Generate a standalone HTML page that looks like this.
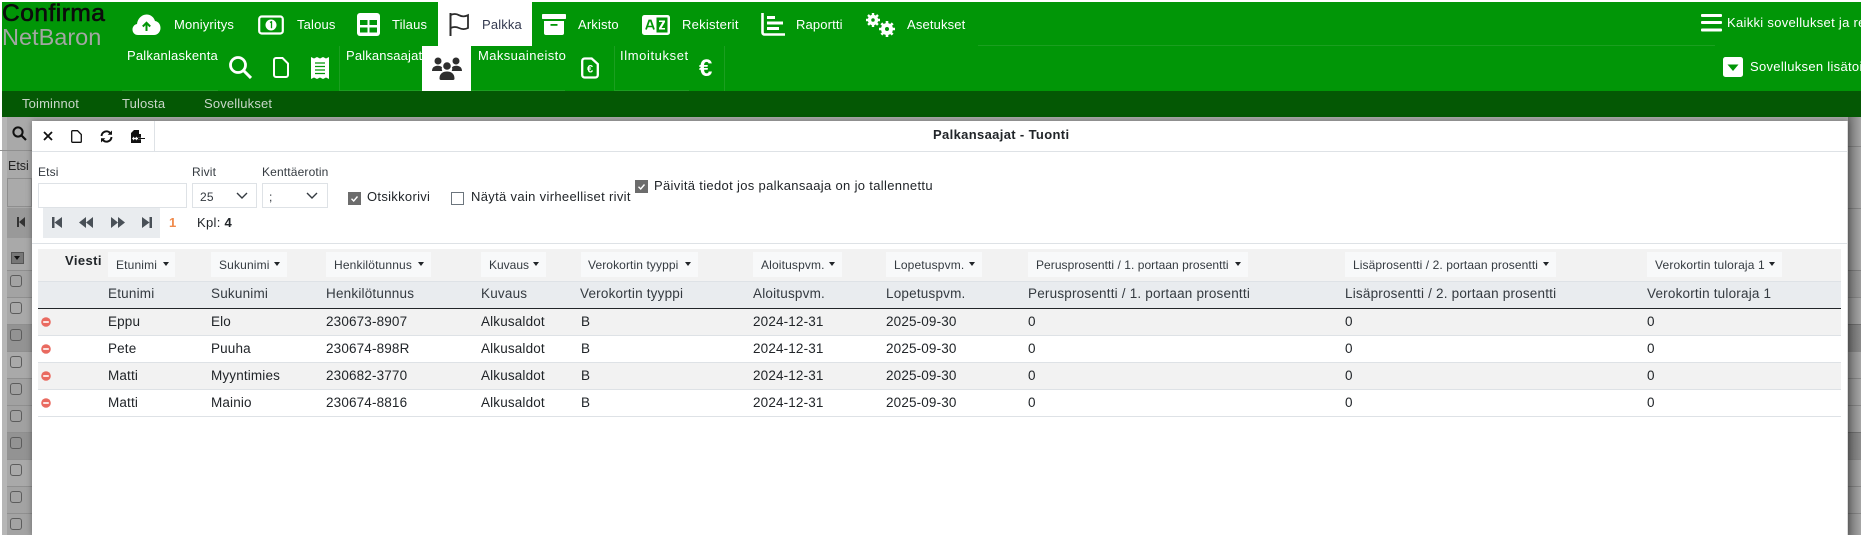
<!DOCTYPE html>
<html><head><meta charset="utf-8"><title>Palkansaajat - Tuonti</title>
<style>
html,body{margin:0;padding:0;background:#fff}
#p{position:relative;width:1861px;height:535px;overflow:hidden;background:#a9a9a9;font-family:"Liberation Sans",sans-serif;font-size:13px;color:#212529}
#p div,#p span.a,#p svg{position:absolute}
.t{position:absolute;white-space:nowrap;line-height:16px;height:16px}
.w{color:#fff}
.m{font-size:13px;letter-spacing:.15px}
.l{font-size:13px;letter-spacing:.3px}
.f{font-size:12px;letter-spacing:.15px;color:#343a40}
.h{font-size:13.5px;letter-spacing:.2px;color:#343a40}
.c{font-size:13.5px;letter-spacing:.15px;color:#212529}
.b{background:#f8f9fa;height:25px;top:252px}
.ca{position:absolute;top:5px;width:0;height:0;border-left:3.5px solid transparent;border-right:3.5px solid transparent;border-top:4px solid #212529}
.cb{border:1.5px solid #5c5c5c;border-radius:3px;width:10px;height:10px;left:10px;box-sizing:content-box}
.ln{left:7px;width:25px;height:1px;background:#8f8f8f}
.rl{left:1848px;width:13px;height:1px;background:rgba(0,0,0,.16)}
.sep{width:1px;background:#1b9f20}
.ul{height:1px;background:#1b9f20;top:90px}
</style></head><body><div id="p">

<!-- page background -->
<div style="left:0;top:0;width:1861px;height:2px;background:#fff"></div>
<div style="left:0;top:0;width:2px;height:535px;background:#fff"></div>
<div style="left:2px;top:117px;width:5px;height:418px;background:#b6b6b6"></div>
<div style="left:7px;top:117px;width:25px;height:418px;background:#a9a9a9"></div>
<div style="left:0;top:150px;width:32px;height:1px;background:#8f8f8f"></div>
<div style="left:7px;top:178px;width:25px;height:29px;background:#aaa;border:1px solid #8e8e8e;box-sizing:border-box"></div>
<div style="left:7px;top:208px;width:25px;height:30px;background:#999"></div>
<div style="left:7px;top:270px;width:25px;height:27px;background:#a3a3a3"></div>
<div style="left:7px;top:324px;width:25px;height:27px;background:#939393"></div>
<div style="left:7px;top:378px;width:25px;height:54px;background:#a1a1a1"></div>
<div style="left:7px;top:432px;width:25px;height:27px;background:#939393"></div>
<div style="left:7px;top:486px;width:25px;height:49px;background:#a3a3a3"></div>
<div class="ln" style="top:270px"></div><div class="ln" style="top:297px"></div><div class="ln" style="top:324px"></div><div class="ln" style="top:351px"></div><div class="ln" style="top:378px"></div><div class="ln" style="top:405px"></div><div class="ln" style="top:432px"></div><div class="ln" style="top:459px"></div><div class="ln" style="top:486px"></div><div class="ln" style="top:513px"></div>
<svg style="left:11px;top:125px" width="16" height="16" viewBox="0 0 16 16"><circle cx="7" cy="7" r="4.6" fill="none" stroke="#111" stroke-width="2"/><path d="M10.500 10.500L15 15" stroke="#111" stroke-width="2.200"/></svg>
<span class="t" style="left:8px;top:158px;font-size:12.500px;color:#222">Etsi</span>
<svg style="left:16px;top:216px" width="10" height="12" viewBox="0 0 10 12"><path d="M1 1h2v10H1zM9 1v10L3 6z" fill="#333"/></svg>
<div style="left:11px;top:252px;width:13px;height:12px;background:#777;border:1px solid #555;box-sizing:border-box"></div>
<div style="left:14px;top:256px;width:0;height:0;border-left:3.500px solid transparent;border-right:3.500px solid transparent;border-top:4px solid #111"></div>
<div class="cb" style="top:275px"></div><div class="cb" style="top:302px"></div><div class="cb" style="top:329px"></div><div class="cb" style="top:356px"></div><div class="cb" style="top:383px"></div><div class="cb" style="top:410px"></div><div class="cb" style="top:437px"></div><div class="cb" style="top:464px"></div><div class="cb" style="top:491px"></div><div class="cb" style="top:518px"></div>
<!-- right strip -->
<div style="left:1848px;top:117px;width:13px;height:418px;background:linear-gradient(90deg,#737373,#a6a6a6)"></div>
<div style="left:1848px;top:270px;width:13px;height:27px;background:rgba(0,0,0,.06)"></div>
<div style="left:1848px;top:324px;width:13px;height:27px;background:rgba(0,0,0,.16)"></div>
<div style="left:1848px;top:432px;width:13px;height:27px;background:rgba(0,0,0,.14)"></div>
<div class="rl" style="top:146px"></div><div class="rl" style="top:208px"></div><div class="rl" style="top:270px"></div><div class="rl" style="top:297px"></div><div class="rl" style="top:324px"></div><div class="rl" style="top:351px"></div><div class="rl" style="top:378px"></div><div class="rl" style="top:405px"></div><div class="rl" style="top:432px"></div><div class="rl" style="top:459px"></div><div class="rl" style="top:486px"></div><div class="rl" style="top:513px"></div>

<!-- top header -->
<div style="left:2px;top:2px;width:1859px;height:89px;background:#019607"></div>
<div style="left:2px;top:91px;width:1859px;height:26px;background:#045804"></div>
<div style="left:978px;top:45px;width:737px;height:1px;background:#1b9f20"></div>
<span class="t" style="left:2px;top:1px;font-size:24.500px;line-height:26px;height:26px;color:#0c0c0c;-webkit-text-stroke:.6px #0c0c0c;letter-spacing:.5px">Confirma</span>
<span class="t" style="left:2px;top:24px;font-size:23.500px;line-height:26px;height:26px;color:#a2a7a2;letter-spacing:0">NetBaron</span>

<!-- cloud -->
<svg style="left:132px;top:13px" width="29" height="23" viewBox="0 0 29 23"><path d="M6 22C2.500 22 .5 19.500 .5 16.500C.5 13.500 2.500 11.500 5 11C5.500 6 9.500 1.500 14.500 1.500C19 1.500 22 4.500 23 8C26.500 8.500 28.500 11.500 28.500 15C28.500 19 25.500 22 22 22Z" fill="#fff"/><path d="M14.500 18V10M10.800 13.500L14.500 9.800L18.200 13.500" fill="none" stroke="#019607" stroke-width="2"/></svg>
<span class="t w m" style="left:174px;top:17px">Moniyritys</span>
<!-- money -->
<svg style="left:258px;top:15px" width="26" height="20" viewBox="0 0 26 20"><rect x="1.200" y="1.500" width="23.600" height="17" rx="2.500" fill="none" stroke="#fff" stroke-width="2.200"/><circle cx="13" cy="10" r="5.500" fill="#fff"/><path d="M12 7.500l1.500-.7v6.400" fill="none" stroke="#019607" stroke-width="1.300"/></svg>
<span class="t w m" style="left:297px;top:17px">Talous</span>
<!-- table -->
<svg style="left:357px;top:13px" width="23" height="23" viewBox="0 0 23 23"><rect width="23" height="23" rx="3" fill="#fff"/><rect x="3" y="7" width="7.500" height="5" fill="#019607"/><rect x="12.500" y="7" width="7.500" height="5" fill="#019607"/><rect x="3" y="14.500" width="7.500" height="5" fill="#019607"/><rect x="12.500" y="14.500" width="7.500" height="5" fill="#019607"/></svg>
<span class="t w m" style="left:392px;top:17px">Tilaus</span>
<!-- palkka tab -->
<div style="left:438px;top:2px;width:94px;height:44px;background:#fff"></div>
<svg style="left:448px;top:12px" width="22" height="24" viewBox="0 0 22 24"><path d="M2.500 1v23" stroke="#2b2b2b" stroke-width="2" fill="none"/><path d="M2.500 3C6 1.500 9 2 11 3.200C14 4.800 17 4.700 20 3.200V16C17 17.500 14 17.500 11 16C9 15 6 14.500 2.500 16" stroke="#2b2b2b" stroke-width="1.800" fill="none"/></svg>
<span class="t m" style="left:482px;top:17px;color:#343a50">Palkka</span>
<!-- archive -->
<svg style="left:542px;top:14px" width="24" height="21" viewBox="0 0 24 21"><rect x="0" y="0" width="24" height="5" rx=".8" fill="#fff"/><path d="M2 7h20v12a2 2 0 0 1-2 2H4a2 2 0 0 1-2-2z" fill="#fff"/><rect x="8.500" y="10" width="7" height="1.800" fill="#019607"/></svg>
<span class="t w m" style="left:578px;top:17px">Arkisto</span>
<!-- A-Z -->
<svg style="left:642px;top:15px" width="28" height="20" viewBox="0 0 28 20"><rect width="28" height="20" rx="2.500" fill="#fff"/><rect x="14.500" y="2.500" width="11" height="15" fill="#019607"/><path d="M17 5.500h6v1.500L19.500 13H23v1.500h-6V13l3.500-6H17z" fill="#fff"/><path d="M4 14.500L7.200 5.500h1.600L12 14.500" fill="none" stroke="#019607" stroke-width="1.800"/><path d="M5.500 11.500h5" stroke="#019607" stroke-width="1.500"/></svg>
<span class="t w m" style="left:682px;top:17px;letter-spacing:.25px">Rekisterit</span>
<!-- chart -->
<svg style="left:761px;top:13px" width="24" height="23" viewBox="0 0 24 23"><path d="M1.500 0v19.500a2 2 0 0 0 2 2H24" fill="none" stroke="#fff" stroke-width="2.600"/><rect x="6" y="3" width="8" height="3" fill="#fff"/><rect x="6" y="8.500" width="16" height="3" fill="#fff"/><rect x="6" y="14" width="12" height="3" fill="#fff"/></svg>
<span class="t w m" style="left:796px;top:17px">Raportti</span>
<!-- gears -->
<svg style="left:866px;top:12px" width="30" height="25" viewBox="0 0 30 25"><g fill="none" stroke="#fff"><circle cx="7" cy="8" r="3.500" stroke-width="3.500"/><path d="M7 1v14M0 8h14M2 3l10 10M12 3L2 13" stroke-width="2.400" stroke-dasharray="2.400 9.200"/><circle cx="21" cy="17" r="4" stroke-width="4"/><path d="M21 9v16M13 17h16M15.300 11.300l11.400 11.400M26.700 11.300L15.300 22.700" stroke-width="2.600" stroke-dasharray="2.600 10.800"/></g></svg>
<span class="t w m" style="left:907px;top:17px">Asetukset</span>
<!-- right top -->
<svg style="left:1701px;top:14px" width="21" height="18" viewBox="0 0 21 18"><rect y="0" width="21" height="3" rx="1" fill="#fff"/><rect y="7" width="21" height="3" rx="1" fill="#fff"/><rect y="14.500" width="21" height="3" rx="1" fill="#fff"/></svg>
<span class="t w m" style="left:1727px;top:15px;letter-spacing:.3px">Kaikki sovellukset ja resurssit</span>
<svg style="left:1723px;top:57px" width="20" height="20" viewBox="0 0 20 20"><rect width="20" height="20" rx="2.500" fill="#fff"/><path d="M4.500 7.500h11L10 14z" fill="#019607"/></svg>
<span class="t w m" style="left:1750px;top:59px;letter-spacing:.3px">Sovelluksen lisätoiminnot</span>

<!-- second row -->
<span class="t w m" style="left:127px;top:48px;letter-spacing:.2px">Palkanlaskenta</span>
<div class="ul" style="left:122px;width:96px"></div>
<svg style="left:228px;top:55px" width="24" height="24" viewBox="0 0 24 24"><circle cx="10" cy="10" r="7.500" fill="none" stroke="#fff" stroke-width="2.800"/><path d="M15.500 15.500L23 23" stroke="#fff" stroke-width="3"/></svg>
<svg style="left:273px;top:57px" width="16" height="21" viewBox="0 0 16 21"><path d="M1 3a2 2 0 0 1 2-2h6.500L15 6.500V18a2 2 0 0 1-2 2H3a2 2 0 0 1-2-2z" fill="none" stroke="#fff" stroke-width="2"/></svg>
<svg style="left:311px;top:57px" width="18" height="22" viewBox="0 0 18 22"><path d="M0 0l3 1.500L6 0l3 1.500L12 0l3 1.500L18 0v22l-3-1.500L12 22l-3-1.500L6 22l-3-1.500L0 22z" fill="#fff"/><path d="M4 6h10M4 9.500h10M4 13h10M4 16.500h10" stroke="#019607" stroke-width="1.300"/></svg>
<div class="sep" style="left:339px;top:46px;height:45px"></div>
<span class="t w m" style="left:346px;top:48px">Palkansaajat</span>
<div class="ul" style="left:340px;width:82px"></div>
<div style="left:422px;top:46px;width:49px;height:45px;background:#fff"></div>
<svg style="left:432px;top:57px" width="30" height="23" viewBox="0 0 30 23"><g fill="#2e2e2e"><circle cx="6" cy="4" r="3.500"/><circle cx="24" cy="4" r="3.500"/><circle cx="15" cy="9" r="3.800"/><path d="M0 14C0 10 3 8.800 6 8.800C7.500 8.800 9 9.300 10 10.300C9.500 11.500 9.800 13 10.300 14zM30 14C30 10 27 8.800 24 8.800C22.500 8.800 21 9.300 20 10.300C20.500 11.500 20.200 13 19.700 14zM7.500 21.500C7.500 16.500 11 14.500 15 14.500C19 14.500 22.500 16.500 22.500 21.500Q22.500 23 21 23H9Q7.500 23 7.500 21.500z"/></g></svg>
<span class="t w m" style="left:478px;top:48px;letter-spacing:.4px">Maksuaineisto</span>
<div class="ul" style="left:471px;width:94px"></div>
<svg style="left:581px;top:57px" width="18" height="22" viewBox="0 0 18 22"><path d="M1.200 4a2.500 2.500 0 0 1 2.500-2.500h7L16.800 7v11a2.500 2.500 0 0 1-2.500 2.500H3.700A2.500 2.500 0 0 1 1.200 18z" fill="none" stroke="#fff" stroke-width="2.300"/><text x="9" y="15.500" text-anchor="middle" font-family="Liberation Sans" font-weight="bold" font-size="11" fill="#fff">€</text></svg>
<div class="sep" style="left:614px;top:46px;height:45px"></div>
<span class="t w m" style="left:620px;top:48px;letter-spacing:.6px">Ilmoitukset</span>
<div class="ul" style="left:614px;width:75px"></div>
<span class="t w" style="left:699px;top:56px;font-size:24px;line-height:26px;height:26px;font-weight:bold">€</span>
<div class="sep" style="left:724px;top:46px;height:45px"></div>
<!-- dark menu -->
<span class="t m" style="left:22px;top:96px;color:#c9d6c9">Toiminnot</span>
<span class="t m" style="left:122px;top:96px;color:#c9d6c9">Tulosta</span>
<span class="t m" style="left:204px;top:96px;color:#c9d6c9">Sovellukset</span>

<!-- modal -->
<div style="left:32px;top:121px;width:1816px;height:414px;background:#fff;border-right:1px solid #dcdcdc;box-sizing:border-box;box-shadow:0 0 6px rgba(0,0,0,.35)"></div>
<div style="left:32px;top:151px;width:1815px;height:1px;background:#dee2e6"></div>
<div style="left:154px;top:121px;width:1px;height:30px;background:#dee2e6"></div>
<svg style="left:43px;top:131px" width="10" height="10" viewBox="0 0 10 10"><path d="M1 1l8 8M9 1L1 9" stroke="#111" stroke-width="1.800"/></svg>
<svg style="left:71px;top:130px" width="11" height="13" viewBox="0 0 11 13"><path d="M.7 1.500a.8.800 0 0 1 .8-.8h5L10.300 4.500v7a.8.800 0 0 1-.8.800h-8a.8.800 0 0 1-.8-.8z" fill="#fff" stroke="#111" stroke-width="1.300"/></svg>
<svg style="left:100px;top:130px" width="13" height="13" viewBox="0 0 13 13"><path d="M1.500 6A5 5 0 0 1 10 2.800M11.500 7A5 5 0 0 1 3 10.200" fill="none" stroke="#111" stroke-width="1.900"/><path d="M12 .5v4.300H7.700zM1 12.500V8.200h4.300z" fill="#111"/></svg>
<svg style="left:131px;top:130px" width="14" height="13" viewBox="0 0 14 13"><path d="M3 0h5v4h2v9H0V3z" fill="#111"/><path d="M3 6.500L1 8.500L3 10.500V9.200H14V7.800H3z" fill="#fff"/><path d="M7 8.500h7" stroke="#111" stroke-width="1"/><path d="M6 6.500L4 8.500L6 10.500z" fill="#fff"/></svg>
<span class="t" style="left:933px;top:127px;font-size:13px;font-weight:bold;color:#212529;letter-spacing:.35px">Palkansaajat - Tuonti</span>

<span class="t f" style="left:38px;top:164px;color:#343a40">Etsi</span>
<span class="t f" style="left:192px;top:164px">Rivit</span>
<span class="t f" style="left:262px;top:164px">Kenttäerotin</span>
<div style="left:38px;top:183px;width:149px;height:25px;border:1px solid #dee2e6;box-sizing:border-box;background:#fff"></div>
<div style="left:192px;top:183px;width:65px;height:25px;border:1px solid #dee2e6;box-sizing:border-box;background:#fff"></div>
<span class="t f" style="left:200px;top:189px">25</span>
<svg style="left:236px;top:192px" width="12" height="8" viewBox="0 0 12 8"><path d="M1 1l5 5 5-5" fill="none" stroke="#343a40" stroke-width="1.400"/></svg>
<div style="left:262px;top:183px;width:66px;height:25px;border:1px solid #dee2e6;box-sizing:border-box;background:#fff"></div>
<span class="t f" style="left:269px;top:189px">;</span>
<svg style="left:306px;top:192px" width="12" height="8" viewBox="0 0 12 8"><path d="M1 1l5 5 5-5" fill="none" stroke="#343a40" stroke-width="1.400"/></svg>
<svg style="left:348px;top:192px" width="13" height="13" viewBox="0 0 13 13"><rect width="13" height="13" fill="#6c6c6c"/><path d="M3.500 6.800L5.700 9L9.500 4.500" fill="none" stroke="#fff" stroke-width="1.400"/></svg>
<span class="t l" style="left:367px;top:189px">Otsikkorivi</span>
<div style="left:451px;top:192px;width:13px;height:13px;border:1px solid #6c757d;box-sizing:border-box;background:#fff"></div>
<span class="t l" style="left:471px;top:189px;letter-spacing:.33px">Näytä vain virheelliset rivit</span>
<svg style="left:635px;top:180px" width="13" height="13" viewBox="0 0 13 13"><rect width="13" height="13" fill="#6c6c6c"/><path d="M3.500 6.800L5.700 9L9.500 4.500" fill="none" stroke="#fff" stroke-width="1.400"/></svg>
<span class="t l" style="left:654px;top:178px;letter-spacing:.33px">Päivitä tiedot jos palkansaaja on jo tallennettu</span>

<div style="left:43px;top:208px;width:117px;height:30px;background:#e9ecef"></div>
<svg style="left:52px;top:217px" width="10" height="11" viewBox="0 0 10 11"><path d="M0 0h2.500v11H0zM10 0v11L2.500 5.500z" fill="#495057"/></svg>
<svg style="left:79px;top:217px" width="14" height="11" viewBox="0 0 14 11"><path d="M7 0v11L0 5.500zM14 0v11L7 5.500z" fill="#495057"/></svg>
<svg style="left:111px;top:217px" width="14" height="11" viewBox="0 0 14 11"><path d="M0 0v11L7 5.500zM7 0v11L14 5.500z" fill="#495057"/></svg>
<svg style="left:142px;top:217px" width="10" height="11" viewBox="0 0 10 11"><path d="M0 0v11L7.500 5.500zM7.500 0H10v11H7.500z" fill="#495057"/></svg>
<span class="t" style="left:169px;top:215px;font-size:13px;font-weight:bold;color:#f08a4b">1</span>
<span class="t l" style="left:197px;top:215px">Kpl: <b>4</b></span>
<div style="left:32px;top:243px;width:1815px;height:1px;background:#dee2e6"></div>

<!-- table -->
<div style="left:38px;top:249px;width:1803px;height:32px;background:#f2f2f2"></div>
<div style="left:38px;top:281px;width:1803px;height:27px;background:#e9ecef;border-top:1px solid #dee2e6;box-sizing:border-box"></div>
<div style="left:38px;top:308px;width:1803px;height:1px;background:#212529"></div>
<div style="left:38px;top:309px;width:1803px;height:27px;background:#f2f2f2"></div>
<div style="left:38px;top:363px;width:1803px;height:27px;background:#f2f2f2"></div>
<div style="left:38px;top:335px;width:1803px;height:1px;background:#dee2e6"></div>
<div style="left:38px;top:362px;width:1803px;height:1px;background:#dee2e6"></div>
<div style="left:38px;top:389px;width:1803px;height:1px;background:#dee2e6"></div>
<div style="left:38px;top:416px;width:1803px;height:1px;background:#dee2e6"></div>
<span class="t" style="left:65px;top:253px;font-size:13px;font-weight:bold;color:#212529;letter-spacing:.4px">Viesti</span>

<div class="b" style="left:108px;width:67px"><span class="t f" style="left:8px;top:5px">Etunimi</span><i class="ca" style="left:55px;top:10px"></i></div>
<div class="b" style="left:211px;width:76px"><span class="t f" style="left:8px;top:5px">Sukunimi</span><i class="ca" style="left:63px;top:10px"></i></div>
<div class="b" style="left:326px;width:105px"><span class="t f" style="left:8px;top:5px">Henkilötunnus</span><i class="ca" style="left:92px;top:10px"></i></div>
<div class="b" style="left:481px;width:65px"><span class="t f" style="left:8px;top:5px;letter-spacing:0">Kuvaus</span><i class="ca" style="left:52px;top:10px"></i></div>
<div class="b" style="left:581px;width:117px"><span class="t f" style="left:7px;top:5px;letter-spacing:.1px">Verokortin tyyppi</span><i class="ca" style="left:104px;top:10px"></i></div>
<div class="b" style="left:753px;width:89px"><span class="t f" style="left:8px;top:5px">Aloituspvm.</span><i class="ca" style="left:76px;top:10px"></i></div>
<div class="b" style="left:886px;width:96px"><span class="t f" style="left:8px;top:5px">Lopetuspvm.</span><i class="ca" style="left:83px;top:10px"></i></div>
<div class="b" style="left:1028px;width:220px"><span class="t f" style="left:8px;top:5px;letter-spacing:.05px">Perusprosentti / 1. portaan prosentti</span><i class="ca" style="left:207px;top:10px"></i></div>
<div class="b" style="left:1345px;width:211px"><span class="t f" style="left:8px;top:5px;letter-spacing:.1px">Lisäprosentti / 2. portaan prosentti</span><i class="ca" style="left:198px;top:10px"></i></div>
<div class="b" style="left:1647px;width:135px"><span class="t f" style="left:8px;top:5px">Verokortin tuloraja 1</span><i class="ca" style="left:122px;top:10px"></i></div>

<span class="t h" style="left:108px;top:286px">Etunimi</span><span class="t h" style="left:211px;top:286px">Sukunimi</span><span class="t h" style="left:326px;top:286px">Henkilötunnus</span><span class="t h" style="left:481px;top:286px">Kuvaus</span><span class="t h" style="left:580px;top:286px">Verokortin tyyppi</span><span class="t h" style="left:753px;top:286px">Aloituspvm.</span><span class="t h" style="left:886px;top:286px">Lopetuspvm.</span><span class="t h" style="left:1028px;top:286px">Perusprosentti / 1. portaan prosentti</span><span class="t h" style="left:1345px;top:286px">Lisäprosentti / 2. portaan prosentti</span><span class="t h" style="left:1647px;top:286px">Verokortin tuloraja 1</span>

<!-- rows -->
<svg style="left:41px;top:317px" width="10" height="10" viewBox="0 0 10 10"><circle cx="5" cy="5" r="4.800" fill="#e96a60"/><rect x="2.200" y="4" width="5.600" height="2" fill="#fbe3e0"/></svg>
<span class="t c" style="left:108px;top:314px">Eppu</span><span class="t c" style="left:211px;top:314px">Elo</span><span class="t c" style="left:326px;top:314px">230673-8907</span><span class="t c" style="left:481px;top:314px">Alkusaldot</span><span class="t c" style="left:581px;top:314px">B</span><span class="t c" style="left:753px;top:314px">2024-12-31</span><span class="t c" style="left:886px;top:314px">2025-09-30</span><span class="t c" style="left:1028px;top:314px">0</span><span class="t c" style="left:1345px;top:314px">0</span><span class="t c" style="left:1647px;top:314px">0</span>

<svg style="left:41px;top:344px" width="10" height="10" viewBox="0 0 10 10"><circle cx="5" cy="5" r="4.800" fill="#e96a60"/><rect x="2.200" y="4" width="5.600" height="2" fill="#fbe3e0"/></svg>
<span class="t c" style="left:108px;top:341px">Pete</span><span class="t c" style="left:211px;top:341px">Puuha</span><span class="t c" style="left:326px;top:341px">230674-898R</span><span class="t c" style="left:481px;top:341px">Alkusaldot</span><span class="t c" style="left:581px;top:341px">B</span><span class="t c" style="left:753px;top:341px">2024-12-31</span><span class="t c" style="left:886px;top:341px">2025-09-30</span><span class="t c" style="left:1028px;top:341px">0</span><span class="t c" style="left:1345px;top:341px">0</span><span class="t c" style="left:1647px;top:341px">0</span>

<svg style="left:41px;top:371px" width="10" height="10" viewBox="0 0 10 10"><circle cx="5" cy="5" r="4.800" fill="#e96a60"/><rect x="2.200" y="4" width="5.600" height="2" fill="#fbe3e0"/></svg>
<span class="t c" style="left:108px;top:368px">Matti</span><span class="t c" style="left:211px;top:368px">Myyntimies</span><span class="t c" style="left:326px;top:368px">230682-3770</span><span class="t c" style="left:481px;top:368px">Alkusaldot</span><span class="t c" style="left:581px;top:368px">B</span><span class="t c" style="left:753px;top:368px">2024-12-31</span><span class="t c" style="left:886px;top:368px">2025-09-30</span><span class="t c" style="left:1028px;top:368px">0</span><span class="t c" style="left:1345px;top:368px">0</span><span class="t c" style="left:1647px;top:368px">0</span>

<svg style="left:41px;top:398px" width="10" height="10" viewBox="0 0 10 10"><circle cx="5" cy="5" r="4.800" fill="#e96a60"/><rect x="2.200" y="4" width="5.600" height="2" fill="#fbe3e0"/></svg>
<span class="t c" style="left:108px;top:395px">Matti</span><span class="t c" style="left:211px;top:395px">Mainio</span><span class="t c" style="left:326px;top:395px">230674-8816</span><span class="t c" style="left:481px;top:395px">Alkusaldot</span><span class="t c" style="left:581px;top:395px">B</span><span class="t c" style="left:753px;top:395px">2024-12-31</span><span class="t c" style="left:886px;top:395px">2025-09-30</span><span class="t c" style="left:1028px;top:395px">0</span><span class="t c" style="left:1345px;top:395px">0</span><span class="t c" style="left:1647px;top:395px">0</span>
</div></body></html>
